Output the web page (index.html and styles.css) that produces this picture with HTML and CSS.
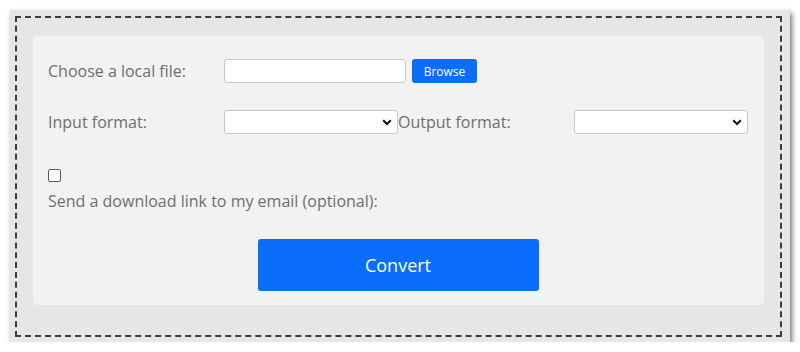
FILE: index.html
```html
<!DOCTYPE html>
<html lang="en">
<head>
<meta charset="utf-8">
<title>Convert</title>
<link rel="stylesheet" href="styles.css">
</head>
<body>
<div class="outer">
  <div class="dashed">
    <form class="panel">
      <div class="row">
        <label class="label">Choose a local file:</label>
        <input class="text" type="text">
        <button type="button" class="browse">Browse</button>
      </div>
      <div class="row grid">
        <label class="label">Input format:</label>
        <div class="sel"><select></select><svg class="chev" viewBox="0 0 10 7" width="10" height="7"><path d="M1.2 1.3 L5 5 L8.8 1.3" fill="none" stroke="#111" stroke-width="2"/></svg></div>
        <label class="label">Output format:</label>
        <div class="sel"><select></select><svg class="chev" viewBox="0 0 10 7" width="10" height="7"><path d="M1.2 1.3 L5 5 L8.8 1.3" fill="none" stroke="#111" stroke-width="2"/></svg></div>
      </div>
      <div class="check"><input type="checkbox" class="cb"></div>
      <div class="email">Send a download link to my email (optional):</div>
      <div class="actions"><button type="button" class="convert">Convert</button></div>
    </form>
  </div>
</div>
</body>
</html>
```
FILE: styles.css
```css
html, body { margin: 0; padding: 0; background: #fff; }
body { font-family: "Open Sans", "Noto Sans", sans-serif; }
.outer {
  margin: 10px 0 0 10px;
  width: 780px;
  height: 332px;
  box-sizing: border-box;
  background: #e6e6e6;
  box-shadow: 2px 3px 5px rgba(0,0,0,0.55);
  padding: 6px 8px 5px 5px;
}
.dashed {
  border: 2px dashed #3c3c3c;
  height: 100%;
  box-sizing: border-box;
  padding: 18px 16px 30px 16px;
}
.panel {
  background: #f2f2f2;
  border-radius: 5px;
  padding: 23px 16px 14px 15px;
  margin: 0;
  color: #6e6e6e;
  font-size: 16px;
  line-height: 24px;
}
.row { display: flex; align-items: center; height: 24px; }
.grid { display: grid; grid-template-columns: 176px 174px 176px 174px; margin-top: 27px; }
.row .label { width: 176px; flex: none; }
.text {
  width: 182px; height: 24px; box-sizing: border-box;
  border: 1px solid #c8c8c8; border-radius: 3px; background: #fff;
  margin: 0; padding: 0 4px;
}
.browse {
  margin-left: 6px; height: 24px; width: 65px; box-sizing: border-box;
  border: none; border-radius: 3px; background: #0b6dfc; color: #fff;
  font-family: "Open Sans", sans-serif; font-size: 12px; padding: 0;
}
.sel { position: relative; width: 174px; height: 24px; }
.sel select {
  appearance: none; -webkit-appearance: none;
  width: 174px; height: 24px; box-sizing: border-box;
  border: 1px solid #c8c8c8; border-radius: 3px; background: #fff; margin: 0; display: block;
}
.chev { position: absolute; right: 6px; top: 9px; }
.check { margin-top: 35px; height: 13px; }
.cb {
  appearance: none; -webkit-appearance: none;
  display: block; margin: 0; width: 13px; height: 13px; box-sizing: border-box;
  border: 1px solid #5a5a5a; border-radius: 2px; background: #fff;
}
.email { margin-top: 7px; }
.actions { display: flex; justify-content: center; margin-top: 26px; }
.convert {
  width: 281px; height: 52px; border: none; border-radius: 3px;
  background: #0b6dfc; color: #fff; font-family: "Open Sans", sans-serif; font-size: 18px;
  padding: 0;
}
```
